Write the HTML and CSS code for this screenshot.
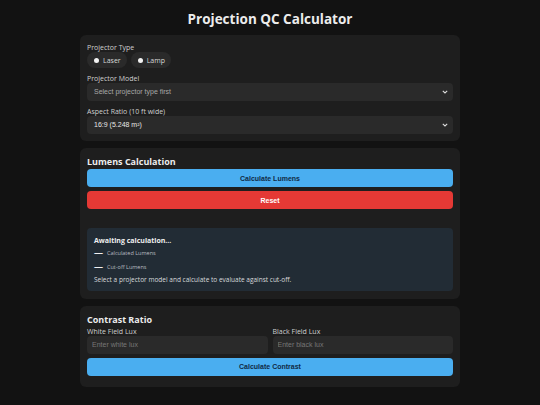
FILE: index.html
```html
<!DOCTYPE html>
<html lang="en">
<head>
<meta charset="utf-8">
<title>Projection QC Calculator</title>
<link rel="stylesheet" href="styles.css">
</head>
<body>
<main class="app">
  <h1 class="title">Projection QC Calculator</h1>

  <section class="card">
    <div class="field first">
      <div class="label">Projector Type</div>
      <div class="pills">
        <label class="pill"><span class="dot"></span>Laser</label>
        <label class="pill"><span class="dot"></span>Lamp</label>
      </div>
    </div>
    <div class="field">
      <div class="label">Projector Model</div>
      <div class="select-wrap">
        <div class="select muted">Select projector type first</div>
        <svg class="chev" width="6" height="4" viewBox="0 0 6 4"><path d="M0.8 0.8 L3 3 L5.2 0.8" fill="none" stroke="#ddd" stroke-width="1.1"/></svg>
      </div>
    </div>
    <div class="field">
      <div class="label">Aspect Ratio (10 ft wide)</div>
      <div class="select-wrap">
        <div class="select">16:9 (5.248 m²)</div>
        <svg class="chev" width="6" height="4" viewBox="0 0 6 4"><path d="M0.8 0.8 L3 3 L5.2 0.8" fill="none" stroke="#ddd" stroke-width="1.1"/></svg>
      </div>
    </div>
  </section>

  <section class="card card-sec card-lumens">
    <h2 class="heading">Lumens Calculation</h2>
    <button class="btn btn-blue">Calculate Lumens</button>
    <button class="btn btn-red">Reset</button>
    <div class="result">
      <div class="result-title">Awaiting calculation...</div>
      <div class="stat"><span class="dash">—</span><span>Calculated Lumens</span></div>
      <div class="stat stat2"><span class="dash">—</span><span>Cut-off Lumens</span></div>
      <div class="note">Select a projector model and calculate to evaluate against cut-off.</div>
    </div>
  </section>

  <section class="card card-sec card-last">
    <h2 class="heading">Contrast Ratio</h2>
    <div class="grid">
      <div class="col">
        <div class="label">White Field Lux</div>
        <input class="input" placeholder="Enter white lux">
      </div>
      <div class="col">
        <div class="label">Black Field Lux</div>
        <input class="input" placeholder="Enter black lux">
      </div>
    </div>
    <button class="btn btn-blue btn-contrast">Calculate Contrast</button>
  </section>
</main>
</body>
</html>
```

FILE: styles.css
```css
* { box-sizing: border-box; }
html, body { margin: 0; padding: 0; }
body {
  background: #121212;
  color: #e6e6e6;
  font-family: "Open Sans", "Noto Sans", sans-serif;
}
.app {
  width: 380px;
  margin: 0 auto;
}
.title {
  margin: 10px 0 7px;
  font-size: 13.5px;
  line-height: 18px;
  font-weight: 700;
  text-align: center;
  color: #ececec;
}
.card {
  background: #1e1e1e;
  border-radius: 6px;
  padding: 7px 7px 7px;
  margin-bottom: 7px;
}
.card-sec { padding-top: 8px; }
.card-lumens { padding-bottom: 8px; }
.card-last { padding-bottom: 11px; }
.field { margin-top: 6px; }
.field.first { margin-top: 1px; }
.label {
  font-size: 7px;
  line-height: 9px;
  color: #cfcfcf;
}
.pills { display: flex; gap: 4px; }
.pill {
  display: flex;
  align-items: center;
  height: 16px;
  padding: 0 6px 0 7px;
  border-radius: 8px;
  background: #2a2a2a;
  font-size: 7px;
  color: #d8d8d8;
}
.dot {
  width: 5px;
  height: 5px;
  border-radius: 50%;
  background: #f2f2f2;
  margin-right: 4px;
}
.select-wrap { position: relative; }
.select {
  height: 18px;
  line-height: 18px;
  padding: 0 7px;
  background: #2a2a2a;
  border-radius: 4px;
  font-family: "Liberation Sans", Arial, sans-serif;
  font-size: 7px;
  color: #e6e6e6;
}
.select.muted { color: #a8a8a8; }
.chev {
  position: absolute;
  right: 5px;
  top: 7px;
}
.heading {
  margin: 0 0 1px;
  font-size: 9px;
  line-height: 12px;
  font-weight: 700;
  color: #ececec;
}
.btn {
  display: block;
  width: 100%;
  height: 18px;
  border: 0;
  border-radius: 4px;
  font-family: "Liberation Sans", Arial, sans-serif;
  font-size: 7px;
  font-weight: 700;
  padding: 0;
}
.btn-blue { background: #4aaef0; color: #0f2a45; }
.btn-red { background: #e53935; color: #fff; margin-top: 4px; }
.result {
  margin-top: 19px;
  background: #222c35;
  border-radius: 4px;
  padding: 7px 7px 6px;
}
.result-title {
  font-size: 7px;
  line-height: 11px;
  font-weight: 700;
  color: #f0f0f0;
}
.stat {
  display: flex;
  align-items: center;
  gap: 4px;
  margin-top: 3px;
  font-size: 5.5px;
  line-height: 9px;
  color: #b8bcc0;
}
.stat2 { margin-top: 5px; }
.dash {
  font-size: 9px;
  font-weight: 700;
  line-height: 7px;
  margin-bottom: 2px;
  color: #f0f0f0;
}
.note {
  margin-top: 3px;
  font-size: 6.5px;
  line-height: 10px;
  color: #d8dadc;
}
.grid {
  display: grid;
  grid-template-columns: 1fr 1fr;
  gap: 5px;
  margin-top: 1px;
}
.input {
  display: block;
  width: 100%;
  height: 17.5px;
  margin: 0;
  border: 0;
  border-radius: 4px;
  background: #2a2a2a;
  padding: 0 5px;
  font-family: "Liberation Sans", Arial, sans-serif;
  font-size: 7px;
  color: #ddd;
  outline: none;
}
.input::placeholder { color: #777; }
.btn-contrast { margin-top: 4px; }
```
